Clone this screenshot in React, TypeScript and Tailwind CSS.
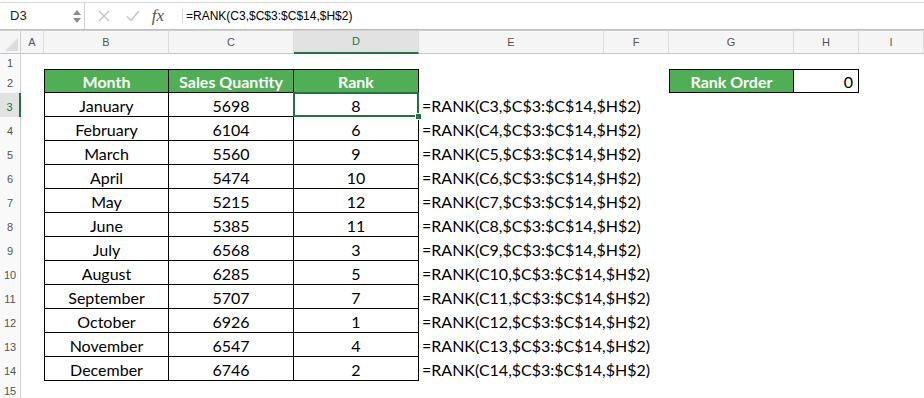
import React from 'react';

const rows = [
  { month: 'January', qty: 5698, rank: 8 },
  { month: 'February', qty: 6104, rank: 6 },
  { month: 'March', qty: 5560, rank: 9 },
  { month: 'April', qty: 5474, rank: 10 },
  { month: 'May', qty: 5215, rank: 12 },
  { month: 'June', qty: 5385, rank: 11 },
  { month: 'July', qty: 6568, rank: 3 },
  { month: 'August', qty: 6285, rank: 5 },
  { month: 'September', qty: 5707, rank: 7 },
  { month: 'October', qty: 6926, rank: 1 },
  { month: 'November', qty: 6547, rank: 4 },
  { month: 'December', qty: 6746, rank: 2 },
];

const colLetters = ['A', 'B', 'C', 'D', 'E', 'F', 'G', 'H', 'I'];

const ui = "font-['Liberation_Sans',Arial,sans-serif]";
const cellFont = "font-['Lato','Carlito',sans-serif] text-[16px] text-black pt-[2px]";

function FormulaBar() {
  return (
    <div className="pt-[2px] bg-white">
      <div className={`flex h-[28px] border-t border-b border-t-[#d7d7d7] border-b-[#bdbdbd] ${ui}`}>
        <div className="flex w-[85px] shrink-0 items-center justify-between border-r border-[#d0d0d0] pl-[10px] pr-[3px]">
          <span className="text-[13px] text-[#222]">D3</span>
          <div className="flex flex-col gap-[3px]">
            <svg width="8" height="5" viewBox="0 0 8 5">
              <path d="M0 5 L4 0 L8 5 Z" fill="#8a8a8a" />
            </svg>
            <svg width="8" height="5" viewBox="0 0 8 5">
              <path d="M0 0 L4 5 L8 0 Z" fill="#8a8a8a" />
            </svg>
          </div>
        </div>
        <div className="flex w-[98px] shrink-0 items-center">
          <div className="flex w-[38px] justify-center">
            <svg width="12" height="12" viewBox="0 0 12 12">
              <path d="M1 1 L11 11 M11 1 L1 11" stroke="#c4c4c4" strokeWidth="1.4" />
            </svg>
          </div>
          <div className="flex w-[20px] justify-center">
            <svg width="14" height="12" viewBox="0 0 14 12">
              <path d="M1 6.5 L5 10.5 L13 1" stroke="#c4c4c4" strokeWidth="1.4" fill="none" />
            </svg>
          </div>
          <div className="flex w-[30px] justify-center font-['Liberation_Serif',serif] text-[17px] italic text-[#555]">
            fx
          </div>
          <div className="ml-auto h-[14px] w-px bg-[#d6d6d6]" />
        </div>
        <div className="flex items-center pl-[3px] text-[12px] text-black">=RANK(C3,$C$3:$C$14,$H$2)</div>
      </div>
    </div>
  );
}

function ColHeader({ letter }: { letter: string }) {
  const active = letter === 'D';
  return (
    <div
      className={`flex items-center justify-center border-t border-r border-b border-t-[#d0d0d0] border-r-[#dcdcdc] text-[11px] ${ui} ${
        active
          ? 'border-b-2 border-b-[#217346] bg-[#e2e2e2] text-[#217346]'
          : 'border-b-[#c6c6c6] bg-[#f5f5f5] text-[#555]'
      }`}
    >
      {letter}
    </div>
  );
}

function RowHeader({ n }: { n: number }) {
  const active = n === 3;
  return (
    <div
      className={`flex items-center justify-center pt-[4px] text-[11px] ${ui} ${
        active
          ? 'border-r-2 border-[#217346] bg-[#e2e2e2] text-[#217346]'
          : 'border-r border-[#d0d0d0] bg-[#f9f9f9] text-[#555]'
      }`}
    >
      {n}
    </div>
  );
}

function GreenHead({ children, left }: { children: React.ReactNode; left?: boolean }) {
  return (
    <div
      className={`flex items-center justify-center border-t border-r border-b border-black bg-[#50ae55] pt-[2px] font-['Lato','Carlito',sans-serif] text-[16px] font-bold text-white ${
        left ? 'border-l' : ''
      }`}
    >
      {children}
    </div>
  );
}

function Cell({ children, left }: { children: React.ReactNode; left?: boolean }) {
  return (
    <div className={`flex items-center justify-center border-r border-b border-black ${cellFont} ${left ? 'border-l' : ''}`}>
      {children}
    </div>
  );
}

export default function App() {
  return (
    <div className="h-[398px] w-[924px] overflow-hidden bg-white">
      <FormulaBar />
      <div className="grid grid-cols-[21px_23px_125px_125px_125px_185px_65px_125px_65px_1fr] grid-rows-[24px_15px_repeat(13,24px)_17px]">
        {/* header row */}
        <div className="relative border-t border-r border-b border-t-[#d0d0d0] border-r-[#d0d0d0] border-b-[#c6c6c6] bg-[#f5f5f5]">
          <svg className="absolute right-[2px] bottom-[2px]" width="13" height="13" viewBox="0 0 13 13">
            <path d="M13 0 L13 13 L0 13 Z" fill="#dcdcdc" />
          </svg>
        </div>
        {colLetters.map((l) => (
          <ColHeader key={l} letter={l} />
        ))}

        {/* row 1 */}
        <RowHeader n={1} />
        {colLetters.map((l) => (
          <div key={`r1${l}`} />
        ))}

        {/* row 2 */}
        <RowHeader n={2} />
        <div />
        <GreenHead left>Month</GreenHead>
        <GreenHead>Sales Quantity</GreenHead>
        <GreenHead>Rank</GreenHead>
        <div />
        <div />
        <GreenHead left>Rank Order</GreenHead>
        <div className={`flex items-center justify-end border-t border-r border-b border-black pr-[5px] ${cellFont}`}>0</div>
        <div />

        {rows.map((r, i) => {
          const n = i + 3;
          return (
            <React.Fragment key={r.month}>
              <RowHeader n={n} />
              <div />
              <Cell left>{r.month}</Cell>
              <Cell>{r.qty}</Cell>
              {n === 3 ? (
                <div className={`relative flex items-center justify-center border-r border-b border-black ${cellFont}`}>
                  {r.rank}
                  <div className="absolute -top-[1px] -left-[1px] -right-[1px] -bottom-[1px] border-2 border-[#217346]" />
                  <div className="absolute -right-[4px] -bottom-[4px] h-[7px] w-[7px] border border-white bg-[#217346]" />
                </div>
              ) : (
                <Cell>{r.rank}</Cell>
              )}
              <div className={`flex items-center whitespace-nowrap pl-[3px] ${cellFont}`}>
                {`=RANK(C${n},$C$3:$C$14,$H$2)`}
              </div>
              <div />
              <div />
              <div />
              <div />
            </React.Fragment>
          );
        })}

        <RowHeader n={15} />
      </div>
    </div>
  );
}
